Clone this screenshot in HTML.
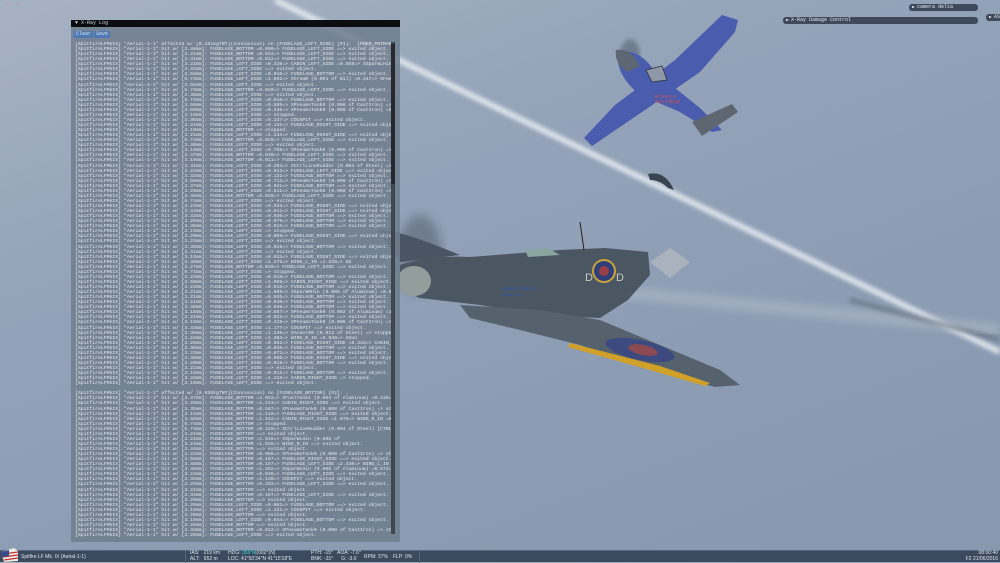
<!DOCTYPE html>
<html><head><meta charset="utf-8"><style>
*{margin:0;padding:0;box-sizing:border-box}
body{width:1000px;height:562px;overflow:hidden;position:relative;font-family:"Liberation Mono",monospace;
background:linear-gradient(160deg,#a7b3c4 0%,#95a4b9 30%,#8d9db4 60%,#8797ae 100%)}
#sky{position:absolute;left:0;top:0}
#log{position:absolute;left:71px;top:20px;width:329px;height:522px;background:rgba(112,126,142,0.88);border-radius:2px}
#log .t{height:7px;background:#0b0d10;color:#cfd4da;font-size:5px;line-height:7px;padding-left:4px}
#log .b{position:absolute;top:11px;height:7px;background:#4d79b4;color:#dfe7f0;font-size:5px;line-height:7px;padding:0 2px}
#log pre{position:absolute;left:4px;top:22px;width:316px;height:496px;overflow:hidden;color:#e6eaee;font-family:"Liberation Mono",monospace;font-size:4.8px;line-height:5.06px;white-space:pre}
#sb{position:absolute;left:320px;top:22px;width:4px;height:492px;background:#3e4650}
#sb div{position:absolute;left:0;top:2px;width:4px;height:140px;background:#27292e}
#bar{position:absolute;left:0;top:550px;width:1000px;height:12px;background:#3b4a5f;border-top:1px solid #56677c;color:#dfe5ec;font-family:"Liberation Sans",sans-serif;font-size:5px}
.pill{position:absolute;height:7px;background:#3e4a5b;border-radius:3px;color:#e5e9ef;font-size:5px;line-height:7px;padding-left:8px}
.pill:before{content:"";position:absolute;left:3px;top:2px;border-left:3px solid #fff;border-top:1.5px solid transparent;border-bottom:1.5px solid transparent}
</style></head><body>
<svg id="sky" width="1000" height="562">
<defs><filter id="bl"><feGaussianBlur stdDeviation="2"/></filter><filter id="bl2"><feGaussianBlur stdDeviation="5"/></filter></defs>
<line x1="275" y1="0" x2="1000" y2="352" stroke="#e6ebf1" stroke-width="6" filter="url(#bl)" opacity="0.9"/>
<line x1="600" y1="290" x2="1000" y2="330" stroke="#b9c3cf" stroke-width="8" filter="url(#bl2)" opacity="0.7"/>
<line x1="850" y1="300" x2="1000" y2="340" stroke="#55606d" stroke-width="4" filter="url(#bl)" opacity="0.6"/>
<g>
<ellipse cx="630" cy="55" rx="10" ry="16" fill="#4c5867" opacity="0.5" filter="url(#bl)"/>
<path d="M722,15 L738,20 L735,32 L700,72 L645,110 L592,146 L584,138 L615,105 L675,60 Z" fill="#4a5cae"/>
<path d="M618,52 Q640,48 655,72 L700,108 L722,130 L712,132 L680,112 L640,95 Q615,75 618,52 Z" fill="#4a5cae"/>
<path d="M616,50 Q632,48 640,66 L628,72 Q614,64 616,50 Z" fill="#5d6673"/>
<path d="M646,70 L662,66 L667,80 L652,82 Z" fill="#8e98a8" stroke="#2a2f3a" stroke-width="0.8"/>
<path d="M692,122 L732,104 L738,112 L702,136 Z" fill="#5e6672"/>
<path d="M648,174 Q665,170 674,190 L668,188 Q660,180 650,180 Z" fill="#3a4350"/>
<text x="655" y="98" font-family="Liberation Sans" font-size="4.5" fill="#d0504a">Bf 109 K-4</text>
<text x="655" y="103" font-family="Liberation Sans" font-size="4.5" fill="#d0504a">New callsign</text>
</g>
<g>
<ellipse cx="420" cy="255" rx="22" ry="40" fill="#4e5866" opacity="0.5" filter="url(#bl2)"/>
<path d="M378,230 Q395,228 460,255 L400,262 Z" fill="#4a5563"/>
<path d="M400,265 Q430,255 470,257 L560,250 L605,248 L648,252 L650,275 L628,300 L600,318 L540,315 L480,305 L420,298 L400,290 Z" fill="#4b5663"/>
<ellipse cx="414" cy="281" rx="17" ry="15" fill="#939e9c"/>
<path d="M460,305 L540,310 L600,320 L660,345 L720,370 L740,385 L715,387 L660,372 L580,345 L520,330 L470,318 Z" fill="#56616e"/>
<path d="M570,343 L660,366 L710,383 L705,386 L650,370 L568,347 Z" fill="#d1a028"/>
<ellipse cx="640" cy="350" rx="35" ry="10" fill="#3d4a80" transform="rotate(12 640 350)"/>
<ellipse cx="643" cy="350" rx="15" ry="5" fill="#8b4a52" transform="rotate(12 643 350)"/>
<circle cx="604" cy="271" r="12" fill="#c9a53a"/><circle cx="604" cy="271" r="10" fill="#2f3f7a"/><circle cx="604" cy="271" r="5" fill="#9a3f48"/>
<path d="M650,262 L670,248 L690,262 L670,278 Z" fill="#a9b2bd"/>
<path d="M580,222 L584,250" stroke="#222" stroke-width="1"/>
<path d="M525,250 L548,248 L560,255 L528,257 Z" fill="#8aa4a0"/>
<text x="585" y="281" font-family="Liberation Sans" font-size="11" fill="#c6ccc0">D</text>
<text x="616" y="281" font-family="Liberation Sans" font-size="11" fill="#c6ccc0">D</text>
<text x="502" y="290" font-family="Liberation Sans" font-size="4.5" fill="#2a55b0">Spitfire LF Mk. IX</text>
<text x="502" y="296" font-family="Liberation Sans" font-size="4.5" fill="#2a55b0">Aerial-1-1</text>
</g>
</svg>
<div class="pill" style="left:909px;top:4px;width:69px">camera delta</div>
<div class="pill" style="left:986px;top:14px;width:20px">AS</div>
<div class="pill" style="left:783px;top:17px;width:195px">X-Ray Damage Control</div>
<div style="position:absolute;left:4px;top:3px;color:#c98c8c;font-size:4px;opacity:.6">FPS: 60</div>
<div id="log">
<div class="t">&#9660; X-Ray Log</div>
<div class="b" style="left:3px">Clear</div><div class="b" style="left:23px">Save</div>
<pre>[SpitfireLFMkIX] "Aerial-1-1" affected w/ [0.161kgTNT](Concussion) on [FUSELAGE_LEFT_SIDE] [#1]:  [PNEM_PRIMARY_CONTAINER
[SpitfireLFMkIX] "Aerial-1-1" hit w/ [3.46mm]: FUSELAGE_BOTTOM =0.009=> FUSELAGE_LEFT_SIDE ==> exited object.
[SpitfireLFMkIX] "Aerial-1-1" hit w/ [3.21mm]: FUSELAGE_BOTTOM =0.012=> FUSELAGE_LEFT_SIDE ==> exited object.
[SpitfireLFMkIX] "Aerial-1-1" hit w/ [3.31mm]: FUSELAGE_BOTTOM =0.012=> FUSELAGE_LEFT_SIDE ==> exited object.
[SpitfireLFMkIX] "Aerial-1-1" hit w/ [3.22mm]: FUSELAGE_LEFT_SIDE =0.438=> CABIN_LEFT_SIDE =0.859=> XSparWLHin (0.005 of
[SpitfireLFMkIX] "Aerial-1-1" hit w/ [3.32mm]: FUSELAGE_LEFT_SIDE ==> exited object.
[SpitfireLFMkIX] "Aerial-1-1" hit w/ [3.58mm]: FUSELAGE_LEFT_SIDE =0.010=> FUSELAGE_BOTTOM ==> exited object.
[SpitfireLFMkIX] "Aerial-1-1" hit w/ [6.74mm]: FUSELAGE_LEFT_SIDE =1.092=> XCrew0 (0.001 of Nil) =0.447=> XFuelTank1 (0.0
[SpitfireLFMkIX] "Aerial-1-1" hit w/ [3.55mm]: FUSELAGE_LEFT_SIDE ==> exited object.
[SpitfireLFMkIX] "Aerial-1-1" hit w/ [6.74mm]: FUSELAGE_BOTTOM =0.020=> FUSELAGE_LEFT_SIDE ==> exited object.
[SpitfireLFMkIX] "Aerial-1-1" hit w/ [3.38mm]: FUSELAGE_LEFT_SIDE ==> exited object.
[SpitfireLFMkIX] "Aerial-1-1" hit w/ [6.74mm]: FUSELAGE_LEFT_SIDE =0.010=> FUSELAGE_BOTTOM ==> exited object.
[SpitfireLFMkIX] "Aerial-1-1" hit w/ [3.50mm]: FUSELAGE_LEFT_SIDE =0.599=> XPneumoTank0 (0.008 of CastIron) => stopped.
[SpitfireLFMkIX] "Aerial-1-1" hit w/ [3.50mm]: FUSELAGE_LEFT_SIDE =0.436=> XPneumoTank0 (0.008 of CastIron) =0.553=> XArm
[SpitfireLFMkIX] "Aerial-1-1" hit w/ [3.19mm]: FUSELAGE_LEFT_SIDE => stopped.
[SpitfireLFMkIX] "Aerial-1-1" hit w/ [3.36mm]: FUSELAGE_LEFT_SIDE =0.337=> COCKPIT ==> exited object.
[SpitfireLFMkIX] "Aerial-1-1" hit w/ [3.21mm]: FUSELAGE_LEFT_SIDE =0.132=> FUSELAGE_RIGHT_SIDE ==> exited object.
[SpitfireLFMkIX] "Aerial-1-1" hit w/ [3.19mm]: FUSELAGE_BOTTOM => stopped.
[SpitfireLFMkIX] "Aerial-1-1" hit w/ [3.21mm]: FUSELAGE_LEFT_SIDE =1.144=> FUSELAGE_RIGHT_SIDE ==> exited object.
[SpitfireLFMkIX] "Aerial-1-1" hit w/ [6.74mm]: FUSELAGE_BOTTOM =0.020=> FUSELAGE_LEFT_SIDE ==> exited object.
[SpitfireLFMkIX] "Aerial-1-1" hit w/ [3.40mm]: FUSELAGE_LEFT_SIDE ==> exited object.
[SpitfireLFMkIX] "Aerial-1-1" hit w/ [3.19mm]: FUSELAGE_LEFT_SIDE =0.768=> XPneumoTank0 (0.008 of CastIron) => stopped.
[SpitfireLFMkIX] "Aerial-1-1" hit w/ [3.47mm]: FUSELAGE_BOTTOM =0.030=> FUSELAGE_LEFT_SIDE ==> exited object.
[SpitfireLFMkIX] "Aerial-1-1" hit w/ [3.19mm]: FUSELAGE_BOTTOM =0.011=> FUSELAGE_LEFT_SIDE ==> exited object.
[SpitfireLFMkIX] "Aerial-1-1" hit w/ [3.31mm]: FUSELAGE_LEFT_SIDE =0.294=> XCtrlLineRudder (0.004 of Steel) => stopped.
[SpitfireLFMkIX] "Aerial-1-1" hit w/ [3.22mm]: FUSELAGE_LEFT_SIDE =0.013=> FUSELAGE_LEFT_SIDE ==> exited object.
[SpitfireLFMkIX] "Aerial-1-1" hit w/ [3.32mm]: FUSELAGE_LEFT_SIDE =0.132=> FUSELAGE_BOTTOM ==> exited object.
[SpitfireLFMkIX] "Aerial-1-1" hit w/ [3.58mm]: FUSELAGE_LEFT_SIDE =0.713=> XPneumoTank0 (0.008 of CastIron) => stopped.
[SpitfireLFMkIX] "Aerial-1-1" hit w/ [3.37mm]: FUSELAGE_LEFT_SIDE =0.021=> FUSELAGE_BOTTOM ==> exited object.
[SpitfireLFMkIX] "Aerial-1-1" hit w/ [3.20mm]: FUSELAGE_LEFT_SIDE =0.511=> XPneumoTank0 (0.008 of CastIron) => stopped.
[SpitfireLFMkIX] "Aerial-1-1" hit w/ [3.45mm]: FUSELAGE_BOTTOM =0.020=> FUSELAGE_LEFT_SIDE ==> exited object.
[SpitfireLFMkIX] "Aerial-1-1" hit w/ [6.74mm]: FUSELAGE_LEFT_SIDE ==> exited object.
[SpitfireLFMkIX] "Aerial-1-1" hit w/ [3.23mm]: FUSELAGE_LEFT_SIDE =0.933=> FUSELAGE_RIGHT_SIDE ==> exited object.
[SpitfireLFMkIX] "Aerial-1-1" hit w/ [3.42mm]: FUSELAGE_LEFT_SIDE =0.811=> FUSELAGE_RIGHT_SIDE ==> exited object.
[SpitfireLFMkIX] "Aerial-1-1" hit w/ [3.32mm]: FUSELAGE_LEFT_SIDE =0.030=> FUSELAGE_BOTTOM ==> exited object.
[SpitfireLFMkIX] "Aerial-1-1" hit w/ [3.20mm]: FUSELAGE_LEFT_SIDE =0.079=> FUSELAGE_BOTTOM ==> exited object.
[SpitfireLFMkIX] "Aerial-1-1" hit w/ [3.38mm]: FUSELAGE_LEFT_SIDE =0.013=> FUSELAGE_BOTTOM ==> exited object.
[SpitfireLFMkIX] "Aerial-1-1" hit w/ [3.19mm]: FUSELAGE_LEFT_SIDE => stopped.
[SpitfireLFMkIX] "Aerial-1-1" hit w/ [3.20mm]: FUSELAGE_LEFT_SIDE =0.069=> FUSELAGE_RIGHT_SIDE ==> exited object.
[SpitfireLFMkIX] "Aerial-1-1" hit w/ [3.23mm]: FUSELAGE_LEFT_SIDE ==> exited object.
[SpitfireLFMkIX] "Aerial-1-1" hit w/ [3.38mm]: FUSELAGE_LEFT_SIDE =0.019=> FUSELAGE_BOTTOM ==> exited object.
[SpitfireLFMkIX] "Aerial-1-1" hit w/ [3.41mm]: FUSELAGE_LEFT_SIDE ==> exited object.
[SpitfireLFMkIX] "Aerial-1-1" hit w/ [3.19mm]: FUSELAGE_LEFT_SIDE =0.033=> FUSELAGE_RIGHT_SIDE ==> exited object.
[SpitfireLFMkIX] "Aerial-1-1" hit w/ [3.40mm]: FUSELAGE_LEFT_SIDE =1.275=> WING_L_IN =1.226=> GE
[SpitfireLFMkIX] "Aerial-1-1" hit w/ [3.27mm]: FUSELAGE_BOTTOM =0.020=> FUSELAGE_LEFT_SIDE ==> exited object.
[SpitfireLFMkIX] "Aerial-1-1" hit w/ [6.74mm]: FUSELAGE_LEFT_SIDE => stopped.
[SpitfireLFMkIX] "Aerial-1-1" hit w/ [3.23mm]: FUSELAGE_LEFT_SIDE =0.018=> FUSELAGE_BOTTOM ==> exited object.
[SpitfireLFMkIX] "Aerial-1-1" hit w/ [3.50mm]: FUSELAGE_LEFT_SIDE =1.008=> CABIN_RIGHT_SIDE ==> exited object.
[SpitfireLFMkIX] "Aerial-1-1" hit w/ [3.23mm]: FUSELAGE_LEFT_SIDE =0.015=> FUSELAGE_BOTTOM ==> exited object.
[SpitfireLFMkIX] "Aerial-1-1" hit w/ [3.21mm]: FUSELAGE_LEFT_SIDE =1.609=> XSparWRHin (0.005 of Aluminum) =0.933=> WING_R
[SpitfireLFMkIX] "Aerial-1-1" hit w/ [3.21mm]: FUSELAGE_LEFT_SIDE =0.025=> FUSELAGE_BOTTOM ==> exited object.
[SpitfireLFMkIX] "Aerial-1-1" hit w/ [3.21mm]: FUSELAGE_LEFT_SIDE =0.040=> FUSELAGE_BOTTOM ==> exited object.
[SpitfireLFMkIX] "Aerial-1-1" hit w/ [3.38mm]: FUSELAGE_LEFT_SIDE =0.046=> FUSELAGE_BOTTOM ==> exited object.
[SpitfireLFMkIX] "Aerial-1-1" hit w/ [3.15mm]: FUSELAGE_LEFT_SIDE =0.687=> XPneumoTank0 (0.002 of Aluminum) =1.353=> XEngO
[SpitfireLFMkIX] "Aerial-1-1" hit w/ [3.21mm]: FUSELAGE_LEFT_SIDE =0.022=> FUSELAGE_BOTTOM ==> exited object.
[SpitfireLFMkIX] "Aerial-1-1" hit w/ [3.19mm]: FUSELAGE_LEFT_SIDE =0.318=> XPneumoTank0 (0.008 of CastIron) => stopped.
[SpitfireLFMkIX] "Aerial-1-1" hit w/ [3.43mm]: FUSELAGE_LEFT_SIDE =1.177=> COCKPIT ==> exited object.
[SpitfireLFMkIX] "Aerial-1-1" hit w/ [3.38mm]: FUSELAGE_LEFT_SIDE =1.236=> XArmor00 (0.013 of Steel) => stopped.
[SpitfireLFMkIX] "Aerial-1-1" hit w/ [3.24mm]: FUSELAGE_LEFT_SIDE =1.304=> WING_R_IN =0.949=> XGun
[SpitfireLFMkIX] "Aerial-1-1" hit w/ [3.26mm]: FUSELAGE_LEFT_SIDE =0.652=> FUSELAGE_RIGHT_SIDE =0.333=> CABIN_LEFT_SIDE ==> e
[SpitfireLFMkIX] "Aerial-1-1" hit w/ [3.35mm]: FUSELAGE_LEFT_SIDE =0.020=> FUSELAGE_BOTTOM ==> exited object.
[SpitfireLFMkIX] "Aerial-1-1" hit w/ [3.23mm]: FUSELAGE_LEFT_SIDE =0.072=> FUSELAGE_BOTTOM ==> exited object.
[SpitfireLFMkIX] "Aerial-1-1" hit w/ [3.38mm]: FUSELAGE_LEFT_SIDE =0.965=> FUSELAGE_RIGHT_SIDE ==> exited object.
[SpitfireLFMkIX] "Aerial-1-1" hit w/ [3.20mm]: FUSELAGE_LEFT_SIDE =0.019=> FUSELAGE_BOTTOM ==> exited object.
[SpitfireLFMkIX] "Aerial-1-1" hit w/ [3.21mm]: FUSELAGE_LEFT_SIDE ==> exited object.
[SpitfireLFMkIX] "Aerial-1-1" hit w/ [3.19mm]: FUSELAGE_LEFT_SIDE =0.012=> FUSELAGE_BOTTOM ==> exited object.
[SpitfireLFMkIX] "Aerial-1-1" hit w/ [3.34mm]: FUSELAGE_LEFT_SIDE =1.118=> CABIN_RIGHT_SIDE => stopped.
[SpitfireLFMkIX] "Aerial-1-1" hit w/ [3.19mm]: FUSELAGE_LEFT_SIDE ==> exited object.
.
[SpitfireLFMkIX] "Aerial-1-1" affected w/ [0.036kgTNT](Concussion) on [FUSELAGE_BOTTOM] [#2]: .
[SpitfireLFMkIX] "Aerial-1-1" hit w/ [3.47mm]: FUSELAGE_BOTTOM =2.022=> XFuelTank1 (0.004 of Aluminum) =0.246=> XFuelTank
[SpitfireLFMkIX] "Aerial-1-1" hit w/ [3.20mm]: FUSELAGE_BOTTOM =1.243=> CABIN_RIGHT_SIDE ==> exited object.
[SpitfireLFMkIX] "Aerial-1-1" hit w/ [3.35mm]: FUSELAGE_BOTTOM =0.587=> XPneumoTank0 (0.008 of CastIron) => stopped.
[SpitfireLFMkIX] "Aerial-1-1" hit w/ [3.15mm]: FUSELAGE_BOTTOM =1.110=> FUSELAGE_RIGHT_SIDE ==> exited object.
[SpitfireLFMkIX] "Aerial-1-1" hit w/ [3.58mm]: FUSELAGE_BOTTOM =1.162=> CABIN_RIGHT_SIDE =1.079=> WING_R_IN =0.949=> XGun
[SpitfireLFMkIX] "Aerial-1-1" hit w/ [6.74mm]: FUSELAGE_BOTTOM => stopped.
[SpitfireLFMkIX] "Aerial-1-1" hit w/ [6.74mm]: FUSELAGE_BOTTOM =0.320=> XCtrlLineRudder (0.004 of Steel) [CTRL_RUDDER_ROD
[SpitfireLFMkIX] "Aerial-1-1" hit w/ [3.21mm]: FUSELAGE_BOTTOM ==> exited object.
[SpitfireLFMkIX] "Aerial-1-1" hit w/ [3.22mm]: FUSELAGE_BOTTOM =1.616=> XSparWLHin (0.005 of
[SpitfireLFMkIX] "Aerial-1-1" hit w/ [3.24mm]: FUSELAGE_BOTTOM =1.925=> WING_R_IN ==> exited object.
[SpitfireLFMkIX] "Aerial-1-1" hit w/ [3.44mm]: FUSELAGE_BOTTOM ==> exited object.
[SpitfireLFMkIX] "Aerial-1-1" hit w/ [3.22mm]: FUSELAGE_BOTTOM =0.085=> XPneumoTank0 (0.008 of CastIron) => stopped.
[SpitfireLFMkIX] "Aerial-1-1" hit w/ [3.58mm]: FUSELAGE_BOTTOM =0.107=> FUSELAGE_RIGHT_SIDE ==> exited object.
[SpitfireLFMkIX] "Aerial-1-1" hit w/ [3.48mm]: FUSELAGE_BOTTOM =0.187=> FUSELAGE_LEFT_SIDE =2.430=> WING_L_IN =0.895=> XG
[SpitfireLFMkIX] "Aerial-1-1" hit w/ [3.40mm]: FUSELAGE_BOTTOM =1.262=> XSparWLHin (0.005 of Aluminum) =0.572=> XEngOil
[SpitfireLFMkIX] "Aerial-1-1" hit w/ [3.23mm]: FUSELAGE_BOTTOM =0.036=> FUSELAGE_LEFT_SIDE ==> exited object.
[SpitfireLFMkIX] "Aerial-1-1" hit w/ [3.35mm]: FUSELAGE_BOTTOM =1.130=> COCKPIT ==> exited object.
[SpitfireLFMkIX] "Aerial-1-1" hit w/ [3.26mm]: FUSELAGE_BOTTOM =0.293=> FUSELAGE_LEFT_SIDE ==> exited object.
[SpitfireLFMkIX] "Aerial-1-1" hit w/ [3.21mm]: FUSELAGE_BOTTOM ==> exited object.
[SpitfireLFMkIX] "Aerial-1-1" hit w/ [3.34mm]: FUSELAGE_BOTTOM =0.167=> FUSELAGE_LEFT_SIDE ==> exited object.
[SpitfireLFMkIX] "Aerial-1-1" hit w/ [3.20mm]: FUSELAGE_BOTTOM ==> exited object.
[SpitfireLFMkIX] "Aerial-1-1" hit w/ [3.26mm]: FUSELAGE_LEFT_SIDE =0.081=> FUSELAGE_BOTTOM ==> exited object.
[SpitfireLFMkIX] "Aerial-1-1" hit w/ [3.19mm]: FUSELAGE_LEFT_SIDE =1.421=> COCKPIT ==> exited object.
[SpitfireLFMkIX] "Aerial-1-1" hit w/ [3.20mm]: FUSELAGE_BOTTOM ==> exited object.
[SpitfireLFMkIX] "Aerial-1-1" hit w/ [3.19mm]: FUSELAGE_LEFT_SIDE =0.044=> FUSELAGE_BOTTOM ==> exited object.
[SpitfireLFMkIX] "Aerial-1-1" hit w/ [3.28mm]: FUSELAGE_BOTTOM ==> exited object.
[SpitfireLFMkIX] "Aerial-1-1" hit w/ [3.33mm]: FUSELAGE_BOTTOM =0.612=> XPneumoTank0 (0.008 of CastIron) => stopped.
[SpitfireLFMkIX] "Aerial-1-1" hit w/ [3.25mm]: FUSELAGE_LEFT_SIDE ==> exited object.</pre>
<div id="sb"><div></div></div>
</div>
<div id="bar">
<svg style="position:absolute;left:0;top:-3px" width="20" height="14"><path d="M1,4 L14,0 L18,3 L18,13 L4,14 Z" fill="#ecece8"/><path d="M3,6 L18,4 M3,9 L18,7 M4,12 L18,10" stroke="#c43030" stroke-width="1.3"/><path d="M1,4 L9,2 L9,8 L2,9 Z" fill="#3a4a8e"/></svg>
<span style="position:absolute;left:21px;top:3px">Spitfire LF Mk. IX (Aerial-1-1)</span>
<span style="position:absolute;left:185px;top:0;height:12px;border-left:1px solid #56677c"></span>
<span style="position:absolute;left:190px;top:0;line-height:5.5px">IAS:&nbsp;&nbsp;&nbsp;219 km<br>ALT:&nbsp;&nbsp;&nbsp;652 m</span>
<span style="position:absolute;left:228px;top:0;line-height:5.5px">HDG: <span style="color:#3fd0d0">356°M</span>(002°(N)<br>LOC: 41°50'34"N 41°15'18"E</span>
<span style="position:absolute;left:311px;top:0;line-height:5.5px">PTH: -15°<br>BNK: -31°</span>
<span style="position:absolute;left:337px;top:0;line-height:5.5px">AOA: -7.6°<br>&nbsp;&nbsp;&nbsp;G: -3.0</span>
<span style="position:absolute;left:364px;top:3px">RPM: 37%</span>
<span style="position:absolute;left:393px;top:3px">FLP: 0%</span>
<span style="position:absolute;left:419px;top:0;height:12px;border-left:1px solid #56677c"></span>
<span style="position:absolute;right:2px;top:0;line-height:5.5px;text-align:right">08:00:40<br>F2 21/06/2016</span>
</div>
</body></html>
